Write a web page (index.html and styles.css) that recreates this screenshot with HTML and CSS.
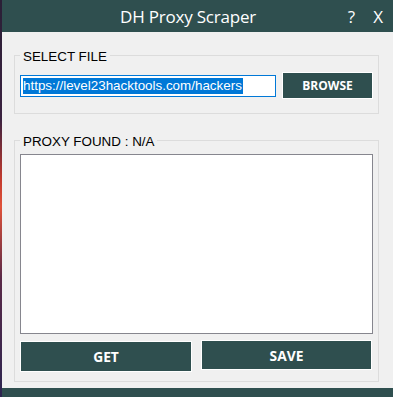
FILE: index.html
```html
<!DOCTYPE html>
<html>
<head>
<meta charset="utf-8">
<link rel="stylesheet" href="styles.css">
</head>
<body>
<div class="window">
  <div class="titlebar">
    <span class="title">DH Proxy Scraper</span>
    <span class="tb-btn help">?</span>
    <span class="tb-btn close">X</span>
  </div>
  <div class="content">
    <fieldset class="group group-file">
      <legend>SELECT FILE</legend>
      <div class="file-row">
        <div class="url-box"><span class="sel">https://level23hacktools.com/hackers</span></div>
        <button class="btn btn-browse">BROWSE</button>
      </div>
    </fieldset>
    <fieldset class="group group-proxy">
      <legend>PROXY FOUND : N/A</legend>
      <div class="list"></div>
      <div class="actions">
        <button class="btn btn-get">GET</button>
        <button class="btn btn-save">SAVE</button>
      </div>
    </fieldset>
  </div>
  <div class="statusbar"></div>
</div>
</body>
</html>
```

FILE: styles.css
```css
html, body {
  margin: 0;
  padding: 0;
  width: 393px;
  height: 397px;
  overflow: hidden;
}
body {
  background: linear-gradient(180deg, #2a1f36 0%, #3a2240 30%, #c23a2e 45%, #e0523a 52%, #5a2a48 70%, #2c2550 100%);
  font-family: "Liberation Sans", Arial, sans-serif;
}
.window {
  margin-left: 2px;
  width: 391px;
  height: 397px;
  display: flex;
  flex-direction: column;
  background: #f0f0f0;
}
.titlebar {
  height: 32px;
  flex: none;
  background: #2f4f4f;
  color: #ffffff;
  display: flex;
  align-items: center;
  font-family: "Open Sans", "Noto Sans", sans-serif;
  font-size: 17px;
}
.title {
  margin-left: 118px;
  letter-spacing: -0.2px;
}
.help {
  margin-left: auto;
  margin-right: 18px;
}
.close {
  margin-right: 10px;
  font-size: 17px;
}
.content {
  flex: 1;
  padding: 13px 14px 0 12px;
}
.group {
  margin: 0;
  border: 1px solid #dcdcdc;
  padding: 0 5px;
}
.group legend {
  padding: 4px 3px 0;
  font-size: 13.4px;
  line-height: 16px;
  color: #000000;
}
.group-file {
  padding-top: 7px;
  padding-bottom: 14px;
}
.file-row {
  display: flex;
  align-items: center;
  gap: 6px;
}
.url-box {
  border: 1px solid #0078d7;
  background: #ffffff;
  padding: 2px 0 0 2px;
  box-sizing: border-box;
  height: 22px;
  width: 256px;
  font-size: 13.4px;
  line-height: 16px;
  white-space: nowrap;
  overflow: hidden;
}
.sel {
  background: #0078d7;
  color: #ffffff;
  display: inline-block;
  padding-right: 1px;
}
.btn {
  background: #2f4f4f;
  color: #ffffff;
  border: 1px solid #ffffff;
  font-family: "Open Sans", "Noto Sans", sans-serif;
  font-weight: 700;
  padding: 0;
  margin: 0;
  box-sizing: border-box;
}
.btn-browse {
  width: 91px;
  height: 27px;
  font-size: 12px;
}
.group-proxy {
  margin-top: 16px;
  padding-top: 4px;
  padding-bottom: 9px;
}
.list {
  height: 180px;
  box-sizing: border-box;
  border: 1px solid #86868e;
  background: #ffffff;
}
.actions {
  display: flex;
  align-items: flex-start;
  gap: 9px;
  margin-top: 6px;
}
.btn-get {
  width: 172px;
  height: 31px;
  margin-top: 1px;
  font-size: 13.8px;
}
.btn-save {
  width: 171px;
  height: 30px;
  font-size: 13.8px;
}
.statusbar {
  height: 9px;
  flex: none;
  background: #2f4f4f;
}
```
